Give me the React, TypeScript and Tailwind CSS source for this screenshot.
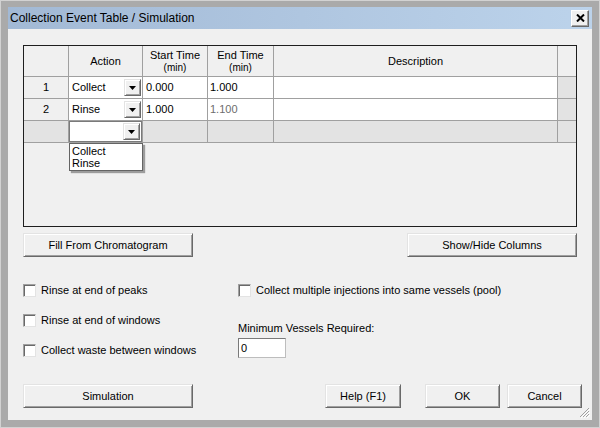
import React from 'react'

function Btn({ children, className }: { children: React.ReactNode; className: string }) {
  return (
    <div
      className={`flex items-center justify-center h-[24px] bg-[#f0f0f0] border border-t-[#e3e3e3] border-l-[#e3e3e3] border-b-[#696969] border-r-[#696969] shadow-[inset_1px_1px_0_#ffffff,inset_-1px_-1px_0_#a0a0a0] text-[11px] leading-[13px] text-black ${className}`}
    >
      {children}
    </div>
  )
}

function Check({ label }: { label: string }) {
  return (
    <div className="flex items-center h-[13px]">
      <div className="w-[13px] h-[13px] bg-white border border-t-[#a0a0a0] border-l-[#a0a0a0] border-b-[#e3e3e3] border-r-[#e3e3e3] shadow-[inset_1px_1px_0_#696969]" />
      <span className="ml-[5px] text-[11px] leading-[13px] whitespace-nowrap">{label}</span>
    </div>
  )
}

function Arrow() {
  return (
    <svg width="7" height="4" viewBox="0 0 7 4">
      <path d="M0 0h7L3.5 4z" fill="#000" />
    </svg>
  )
}

function ComboBtn() {
  return (
    <div className="flex items-center justify-center w-[17px] h-[17px] bg-[#f0f0f0] border border-t-[#e3e3e3] border-l-[#e3e3e3] border-b-[#696969] border-r-[#696969] shadow-[inset_1px_1px_0_#ffffff,inset_-1px_-1px_0_#a0a0a0]">
      <Arrow />
    </div>
  )
}

const rows = [
  { n: '1', action: 'Collect', start: '0.000', end: '1.000', endGray: false },
  { n: '2', action: 'Rinse', start: '1.000', end: '1.100', endGray: true },
]

export default function App() {
  return (
    <div className="w-[600px] h-[428px] bg-[#aaaaaa] border border-[#d2d2d2] px-[7px] pt-[6px] pb-[7px] flex flex-col font-['Liberation_Sans',Arial,sans-serif] text-black">
      {/* title bar */}
      <div className="h-[22px] flex items-center justify-between bg-gradient-to-r from-[#a2b9d5] to-[#bcd3eb] pl-[2px] pr-[3px]">
        <span className="text-[12px] leading-[14px] text-[#000000]">Collection Event Table / Simulation</span>
        <div className="w-[18px] h-[17px] flex items-center justify-center bg-[#f0f0f0] border border-t-[#ffffff] border-l-[#ffffff] border-b-[#696969] border-r-[#696969] shadow-[inset_-1px_-1px_0_#a0a0a0]">
          <svg width="9" height="8" viewBox="0 0 9 8">
            <path d="M1 0.5L8 7.5M8 0.5L1 7.5" stroke="#000" strokeWidth="2" />
          </svg>
        </div>
      </div>

      {/* client area */}
      <div className="relative flex-1 bg-[#f0f0f0] flex flex-col">
        <div className="px-[15px] pt-[16px]">
          <div className="relative h-[182px] border border-[#1e1e1e] bg-[#f0f0f0]">
            <div className="grid grid-cols-[45px_74px_65px_66px_284px_18px] text-[11px] leading-[13px]">
              {/* header */}
              <div className="h-[31px] border-r border-b border-[#a0a0a0]" />
              <div className="h-[31px] border-r border-b border-[#a0a0a0] flex items-center justify-center">Action</div>
              <div className="h-[31px] border-r border-b border-[#a0a0a0] flex flex-col items-center justify-center">
                <span>Start Time</span>
                <span className="text-[10px] leading-[12px]">(min)</span>
              </div>
              <div className="h-[31px] border-r border-b border-[#a0a0a0] flex flex-col items-center justify-center">
                <span>End Time</span>
                <span className="text-[10px] leading-[12px]">(min)</span>
              </div>
              <div className="h-[31px] border-r border-b border-[#a0a0a0] flex items-center justify-center">Description</div>
              <div className="h-[31px] border-b border-[#a0a0a0]" />

              {rows.map((r) => (
                <React.Fragment key={r.n}>
                  <div className="h-[22px] border-r border-b border-[#a0a0a0] flex items-center justify-center">{r.n}</div>
                  <div className="h-[22px] border-r border-b border-[#a0a0a0] bg-white flex items-center justify-between pl-[3px] pr-[1px]">
                    <span>{r.action}</span>
                    <ComboBtn />
                  </div>
                  <div className="h-[22px] border-r border-b border-[#a0a0a0] bg-white flex items-center pl-[3px]">{r.start}</div>
                  <div className={`h-[22px] border-r border-b border-[#a0a0a0] bg-white flex items-center pl-[2px] ${r.endGray ? 'text-[#6d6d6d]' : 'text-black'}`}>
                    {r.end}
                  </div>
                  <div className="h-[22px] border-r border-b border-[#a0a0a0] bg-white" />
                  <div className="h-[22px] border-b border-[#a0a0a0] bg-[#e3e3e3]" />
                </React.Fragment>
              ))}

              {/* new row */}
              <div className="h-[22px] border-r border-b border-[#a0a0a0] bg-[#e3e3e3]" />
              <div className="h-[22px] border-r border-b border-[#a0a0a0] bg-[#e3e3e3]">
                <div className="h-[21px] bg-white border border-[#7a7a7a] flex items-center justify-end pr-[1px]">
                  <ComboBtn />
                </div>
              </div>
              <div className="h-[22px] border-r border-b border-[#a0a0a0] bg-[#e3e3e3]" />
              <div className="h-[22px] border-r border-b border-[#a0a0a0] bg-[#e3e3e3]" />
              <div className="h-[22px] border-r border-b border-[#a0a0a0] bg-[#e3e3e3]" />
              <div className="h-[22px] border-b border-[#a0a0a0] bg-[#e3e3e3]" />
            </div>

            {/* open dropdown list */}
            <div className="absolute left-[45px] top-[97px] w-[74px] h-[28px] bg-white border border-[#646464] shadow-[2px_2px_1px_rgba(0,0,0,0.35)] pl-[2px] pt-[1px] text-[11px] leading-[12px]">
              <div>Collect</div>
              <div>Rinse</div>
            </div>
          </div>

          <div className="mt-[6px] flex justify-between">
            <Btn className="w-[170px]">Fill From Chromatogram</Btn>
            <Btn className="w-[170px]">Show/Hide Columns</Btn>
          </div>

          <div className="mt-[27px] flex">
            <div className="w-[215px] flex flex-col gap-[17px]">
              <Check label="Rinse at end of peaks" />
              <Check label="Rinse at end of windows" />
              <Check label="Collect waste between windows" />
            </div>
            <div className="flex flex-col">
              <Check label="Collect multiple injections into same vessels (pool)" />
              <span className="mt-[25px] text-[11px] leading-[13px]">Minimum Vessels Required:</span>
              <div className="mt-[3px] w-[48px] h-[20px] bg-white border border-t-[#7a7a7a] border-l-[#7a7a7a] border-b-[#bdbdbd] border-r-[#bdbdbd] flex items-center pl-[2px] text-[11px] leading-[13px]">
                0
              </div>
            </div>
          </div>
        </div>

        <div className="mt-[26px] pl-[15px] pr-[10px] flex">
          <Btn className="w-[170px]">Simulation</Btn>
          <div className="flex-1" />
          <Btn className="w-[76px]">Help (F1)</Btn>
          <Btn className="w-[75px] ml-[24px]">OK</Btn>
          <Btn className="w-[75px] ml-[7px]">Cancel</Btn>
        </div>

        {/* size grip */}
        <svg className="absolute right-[2px] bottom-[2px]" width="11" height="11" viewBox="0 0 11 11">
          <path d="M10 1L1 10M10 4L4 10M10 7L7 10" stroke="#a0a0a0" strokeWidth="1" />
          <path d="M11 2L2 11M11 5L5 11M11 8L8 11" stroke="#ffffff" strokeWidth="1" />
        </svg>
      </div>
    </div>
  )
}
